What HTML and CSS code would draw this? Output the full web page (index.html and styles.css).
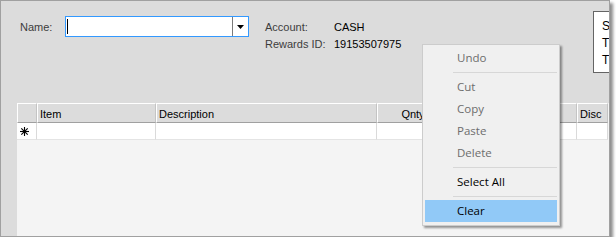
FILE: index.html
```html
<!DOCTYPE html>
<html>
<head>
<meta charset="utf-8">
<link rel="stylesheet" href="styles.css">
</head>
<body>
<div class="window">
  <div class="top">
    <div class="label name-label">Name:</div>
    <div class="combo">
      <div class="combo-text"><span class="caret"></span></div>
      <div class="combo-btn">
        <svg width="8" height="5" viewBox="0 0 8 5"><polygon points="0,0 7,0 3.5,4" fill="#000"/></svg>
      </div>
    </div>
    <div class="account">
      <div class="label">Account:</div><div class="value">CASH</div>
      <div class="label">Rewards ID:</div><div class="value">19153507975</div>
    </div>
    <div class="sidebox">
      <div>S</div><div>T</div><div>T</div>
    </div>
  </div>
  <div class="grid">
    <div class="row header">
      <div class="cell c-rh"></div>
      <div class="cell c-item">Item</div>
      <div class="cell c-desc">Description</div>
      <div class="cell c-qnty">Qnty</div>
      <div class="cell c-price"></div>
      <div class="cell c-disc">Disc</div>
    </div>
    <div class="row data">
      <div class="cell c-rh">
        <svg width="9" height="9" viewBox="0 0 9 9"><g stroke="#000" stroke-width="1.1"><line x1="4.5" y1="0" x2="4.5" y2="9"/><line x1="0" y1="4.5" x2="9" y2="4.5"/><line x1="1.3" y1="1.3" x2="7.7" y2="7.7"/><line x1="7.7" y1="1.3" x2="1.3" y2="7.7"/></g></svg>
      </div>
      <div class="cell c-item"></div>
      <div class="cell c-desc"></div>
      <div class="cell c-qnty"></div>
      <div class="cell c-price"></div>
      <div class="cell c-disc"></div>
    </div>
  </div>
  <div class="menu">
    <div class="mi disabled">Undo</div>
    <div class="sep"></div>
    <div class="mi disabled">Cut</div>
    <div class="mi disabled">Copy</div>
    <div class="mi disabled">Paste</div>
    <div class="mi disabled">Delete</div>
    <div class="sep"></div>
    <div class="mi">Select All</div>
    <div class="sep"></div>
    <div class="mi active">Clear</div>
  </div>
</div>
</body>
</html>
```
FILE: styles.css
```css
html, body {
  margin: 0;
  padding: 0;
  background: #ffffff;
}
body {
  font-family: "Liberation Sans", Arial, sans-serif;
  font-size: 11px;
}
.window {
  position: relative;
  width: 608px;
  height: 235px;
  border: 1px solid #a0a0a0;
  background: #dcdcdc;
  box-shadow: 3px 3px 3px rgba(0, 0, 0, 0.45);
  display: flex;
  flex-direction: column;
  overflow: hidden;
}
.top {
  height: 102px;
  display: flex;
  align-items: flex-start;
  flex: none;
}
.label {
  color: #3c3c3c;
  line-height: 13px;
}
.value {
  color: #000;
  line-height: 13px;
}
.name-label {
  margin: 20px 0 0 19px;
  width: 45px;
}
.combo {
  margin-top: 15px;
  width: 182px;
  height: 19px;
  border: 1px solid #3399ff;
  background: #fff;
  display: flex;
}
.combo-text {
  flex: 1;
  position: relative;
}
.caret {
  display: block;
  width: 1px;
  height: 15px;
  background: #000;
  margin: 2px 0 0 1px;
}
.combo-btn {
  width: 15px;
  border-left: 1px solid #7a7a7a;
  display: flex;
  align-items: center;
  justify-content: center;
  padding-top: 1px;
}
.account {
  margin: 20px 0 0 16px;
  display: grid;
  grid-template-columns: 69px auto;
  row-gap: 4px;
}
.sidebox {
  flex: none;
  margin: 10px -22px 0 auto;
  width: 38px;
  height: 62px;
  border: 1px solid #646464;
  background: #fff;
  padding: 8px 0 0 8px;
  box-sizing: border-box;
  display: flex;
  flex-direction: column;
  gap: 4px;
  line-height: 13px;
  color: #000;
  font-size: 12px;
}
.grid {
  flex: 1;
  margin-left: 16px;
  background: #f4f4f4;
}
.row {
  display: flex;
}
.cell {
  box-sizing: border-box;
  flex: none;
}
.header {
  height: 20px;
}
.header .cell {
  background: #dcdcdc;
  border-top: 1px solid #fff;
  border-left: 1px solid #fff;
  border-right: 1px solid #c4c4c4;
  border-bottom: 1px solid #a0a0a0;
  padding: 3px 0 0 2px;
  color: #000;
  line-height: 14px;
  white-space: nowrap;
  overflow: hidden;
}
.header .c-qnty {
  text-align: center;
}
.data {
  height: 17px;
}
.data .cell {
  background: #fff;
  border-right: 1px solid #dadada;
  border-bottom: 1px solid #e4e4e4;
}
.data .c-rh {
  display: flex;
  align-items: center;
  padding-left: 3px;
}
.c-rh { width: 20px; }
.c-item { width: 119px; }
.c-desc { width: 221px; }
.c-qnty { width: 70px; }
.c-price { width: 130px; }
.c-disc { width: 31px; }
.menu {
  position: absolute;
  left: 421px;
  top: 43px;
  width: 138px;
  height: 182px;
  box-sizing: border-box;
  border: 1px solid #cccccc;
  background: #f0f0f0;
  padding: 2px;
  box-shadow: 2px 2px 2px rgba(0, 0, 0, 0.4);
  font-family: "Open Sans", "Noto Sans", sans-serif;
  font-size: 11.5px;
}
.mi {
  height: 22px;
  line-height: 22px;
  padding-left: 32px;
  color: #000;
}
.mi.disabled {
  color: #6d6d6d;
}
.mi.active {
  background: #91c9f7;
}
.sep {
  height: 7px;
  display: flex;
  align-items: center;
  padding-left: 28px;
}
.sep::after {
  content: "";
  display: block;
  flex: 1;
  height: 1px;
  background: #d7d7d7;
}
```
